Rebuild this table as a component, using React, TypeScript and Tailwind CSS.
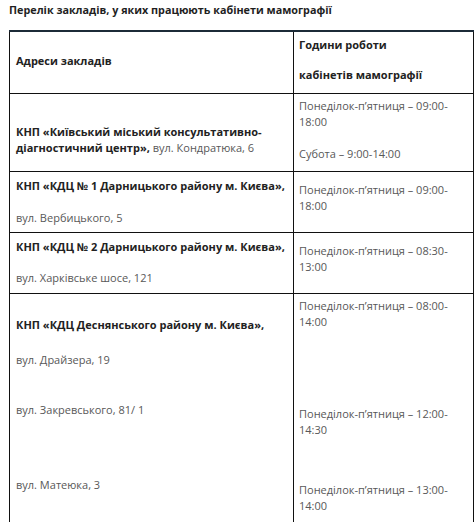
import React from 'react';

const font = { fontFamily: '"Open Sans", "Noto Sans", sans-serif' };

export default function App() {
  return (
    <div className="w-[476px] h-[522px] overflow-hidden bg-white" style={font}>
      <div className="pl-[9px] pt-[2px]">
        <h2 className="text-[10.8px] leading-[16px] font-bold text-[#1f1f1f]">
          Перелік закладів, у яких працюють кабінети мамографії
        </h2>
      </div>

      <table className="ml-[9px] mt-[12px] w-[465px] border-collapse border-t-2 border-t-[#1c2b38] text-[11px] leading-[16px] text-[#585858]">
        <colgroup>
          <col className="w-[284px]" />
          <col />
        </colgroup>
        <tbody>
          {/* header */}
          <tr>
            <td className="h-[62px] border border-[#111] border-t-0 align-top px-[6px] pt-[21px]">
              <p className="font-bold text-[#222]">Адреси закладів</p>
            </td>
            <td className="border border-[#111] border-t-0 align-top px-[5px] pt-[5px]">
              <p className="font-bold text-[#222]">Години роботи</p>
              <p className="mt-[14px] font-bold text-[#222]">кабінетів мамографії</p>
            </td>
          </tr>

          {/* row 1 */}
          <tr>
            <td className="h-[78px] border border-[#111] align-top px-[6px] pt-[30px]">
              <p className="font-bold text-[#222]">КНП «Київський міський консультативно-</p>
              <p>
                <span className="font-bold text-[#222]">діагностичний центр»,</span> вул. Кондратюка, 6
              </p>
            </td>
            <td className="border border-[#111] align-top px-[5px] pt-[4px]">
              <p>Понеділок-п’ятниця – 09:00-<br />18:00</p>
              <p className="mt-[16px]">Субота – 9:00-14:00</p>
            </td>
          </tr>

          {/* row 2 */}
          <tr>
            <td className="h-[61px] border border-[#111] align-top px-[6px] pt-[6px]">
              <p className="font-bold text-[#222]">КНП «КДЦ № 1 Дарницького району м. Києва»,</p>
              <p className="mt-[16px]">вул. Вербицького, 5</p>
            </td>
            <td className="border border-[#111] align-top px-[5px] pt-[10px]">
              <p>Понеділок-п’ятниця – 09:00-<br />18:00</p>
            </td>
          </tr>

          {/* row 3 */}
          <tr>
            <td className="h-[61px] border border-[#111] align-top px-[6px] pt-[6px]">
              <p className="font-bold text-[#222]">КНП «КДЦ № 2 Дарницького району м. Києва»,</p>
              <p className="mt-[15px]">вул. Харківське шосе, 121</p>
            </td>
            <td className="border border-[#111] align-top px-[5px] pt-[10px]">
              <p>Понеділок-п’ятниця – 08:30-<br />13:00</p>
            </td>
          </tr>

          {/* row 4 */}
          <tr>
            <td className="h-[240px] border border-[#111] align-top px-[6px] pt-[23px]">
              <p className="font-bold text-[#222]">КНП «КДЦ Деснянського району м. Києва»,</p>
              <p className="mt-[19px]">вул. Драйзера, 19</p>
              <p className="mt-[34px]">вул. Закревського, 81/ 1</p>
              <p className="mt-[59px]">вул. Матеюка, 3</p>
            </td>
            <td className="border border-[#111] align-top px-[5px] pt-[4px]">
              <p>Понеділок-п’ятниця – 08:00-<br />14:00</p>
              <p className="mt-[76px]">Понеділок-п’ятниця – 12:00-<br />14:30</p>
              <p className="mt-[44px]">Понеділок-п’ятниця – 13:00-<br />14:00</p>
            </td>
          </tr>
        </tbody>
      </table>
    </div>
  );
}
